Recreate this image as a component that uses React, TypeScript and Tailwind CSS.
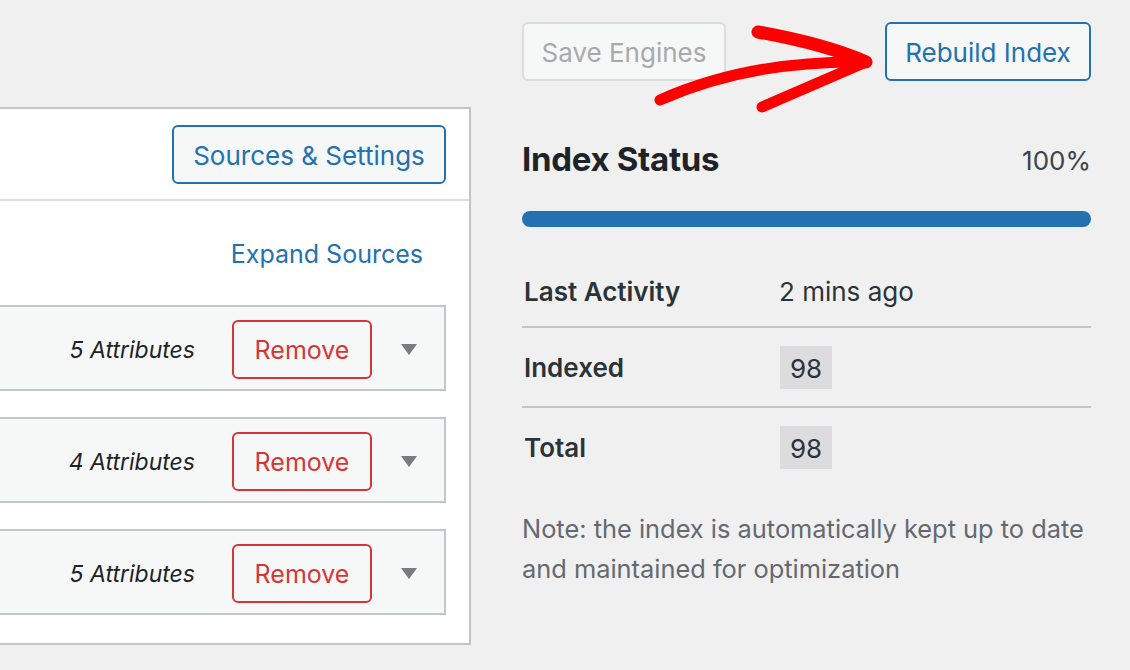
import React from "react";

function Row({ count }: { count: number }) {
  return (
    <div className="h-[86px] bg-[#f6f7f7] border-2 border-l-0 border-[#c3c4c7] flex items-center justify-end pr-[27px]">
      <span className="italic text-[23px] text-[#1d2327] mr-[37px] pt-[4px]">{count} Attributes</span>
      <button className="w-[140px] h-[59px] rounded-[6px] border-2 border-[#d63638] bg-[#f6f7f7] text-[#d63638] text-[25px] mr-[29px] mt-[3px] pt-[3px]">
        Remove
      </button>
      <svg width="16" height="11" viewBox="0 0 16 11" className="mt-[2px]">
        <path d="M0 0 L16 0 L8 11 Z" fill="#787c82" />
      </svg>
    </div>
  );
}

export default function App() {
  return (
    <div className="relative w-[1130px] h-[670px] overflow-hidden bg-[#f0f0f1] font-['Inter',sans-serif] flex">
      {/* Left panel */}
      <div className="mt-[107px] w-[471px] h-[538px] bg-white border-2 border-l-0 border-[#c3c4c7] flex flex-col">
        <div className="h-[92px] flex items-center justify-end pr-[23px] border-b-2 border-[#dcdcde]">
          <button className="w-[274px] h-[59px] rounded-[6px] border-2 border-[#2271b1] bg-[#f6f7f7] text-[#2271b1] text-[26px] pt-[3px]">
            Sources &amp; Settings
          </button>
        </div>
        <div className="h-[104px] flex items-center justify-end pr-[46px] pt-[3px]">
          <span className="text-[25px] text-[#2271b1]">Expand Sources</span>
        </div>
        <div className="flex flex-col gap-[26px] pr-[23px]">
          <Row count={5} />
          <Row count={4} />
          <Row count={5} />
        </div>
      </div>

      {/* Right column */}
      <div className="ml-[51px] w-[569px] pt-[22px] flex flex-col">
        <div className="flex justify-between">
          <button className="w-[204px] h-[59px] rounded-[6px] border-2 border-[#dcdcde] bg-[#f6f7f7] text-[#a7aaad] text-[26px] pt-[2px]">
            Save Engines
          </button>
          <button className="w-[206px] h-[59px] rounded-[6px] border-2 border-[#2271b1] bg-[#f6f7f7] text-[#2271b1] text-[26px] pt-[2px]">
            Rebuild Index
          </button>
        </div>
        <div className="mt-[61px] h-[36px] flex items-center justify-between">
          <span className="text-[33px] font-bold text-[#1d2327] tracking-[-0.3px]">Index Status</span>
          <span className="text-[26px] text-[#3c434a]">100%</span>
        </div>
        <div className="mt-[33px] h-[16px] rounded-full bg-[#2271b1]" />
        <div className="mt-[28px] flex flex-col">
          <div className="h-[73px] flex items-center border-b-2 border-[#c3c4c7] pt-[2px]">
            <span className="w-[257px] pl-[2px] text-[26px] font-semibold text-[#2c3338]">Last Activity</span>
            <span className="text-[26px] text-[#2c3338]">2 mins ago</span>
          </div>
          <div className="h-[80px] flex items-center border-b-2 border-[#c3c4c7]">
            <span className="w-[257px] pl-[2px] text-[26px] font-semibold text-[#2c3338]">Indexed</span>
            <span className="ml-[1px] w-[52px] h-[43px] flex items-center justify-center bg-[#dcdcde] text-[26px] text-[#2c3338] pt-[2px]">98</span>
          </div>
          <div className="h-[78px] flex items-center">
            <span className="w-[257px] pl-[2px] text-[26px] font-semibold text-[#2c3338]">Total</span>
            <span className="ml-[1px] w-[52px] h-[43px] flex items-center justify-center bg-[#dcdcde] text-[26px] text-[#2c3338] pt-[2px]">98</span>
          </div>
        </div>
        <p className="mt-[23px] text-[25.4px] leading-[40px] text-[#646970]">
          Note: the index is automatically kept up to date and maintained for optimization
        </p>
      </div>

      {/* Red annotation arrow */}
      <svg className="absolute left-[640px] top-[20px]" width="240" height="100" viewBox="0 0 240 100">
        <g fill="none" stroke="#ff0000" strokeLinecap="round" strokeLinejoin="round">
          <path d="M20 80 Q 110 40 226 42" strokeWidth="11" />
          <path d="M118 12 Q 185 24 226 42" strokeWidth="13" />
          <path d="M122 87 Q 180 62 226 42" strokeWidth="11" />
        </g>
      </svg>
    </div>
  );
}
